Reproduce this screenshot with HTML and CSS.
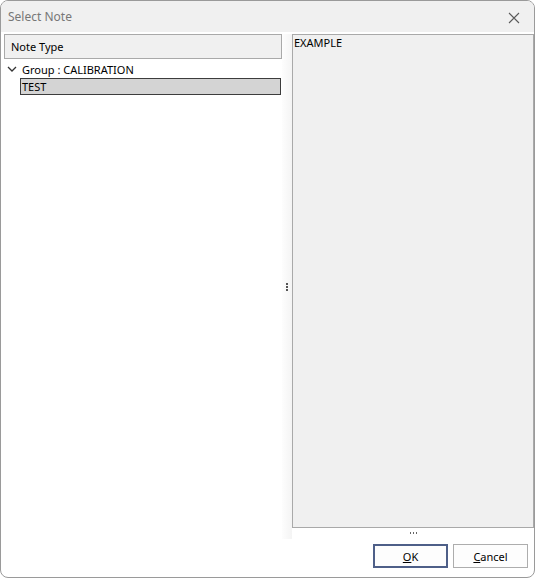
FILE: index.html
```html
<!DOCTYPE html>
<html>
<head>
<meta charset="utf-8">
<link rel="stylesheet" href="styles.css">
</head>
<body>
<div class="window">
  <div class="titlebar">
    <span class="title">Select Note</span>
    <span class="close">
      <svg width="12" height="12" viewBox="0 0 12 12"><path d="M1 1 L11 11 M11 1 L1 11" stroke="#5a5a5a" stroke-width="1.1" fill="none"/></svg>
    </span>
  </div>
  <div class="content">
    <div class="panes">
      <div class="left">
        <div class="header">Note Type</div>
        <div class="group">
          <svg class="chev" width="10" height="8" viewBox="0 0 10 8"><path d="M1 2 L5 6 L9 2" stroke="#333" stroke-width="1.3" fill="none"/></svg>
          <span>Group : CALIBRATION</span>
        </div>
        <div class="item">TEST</div>
      </div>
      <div class="splitter"><span class="vdots"></span></div>
      <div class="right">
        <div class="memo">EXAMPLE</div>
        <div class="hsplit"><span class="hdots"></span></div>
      </div>
    </div>
    <div class="buttons">
      <button class="btn default"><u>O</u>K</button>
      <button class="btn"><u>C</u>ancel</button>
    </div>
  </div>
</div>
</body>
</html>
```
FILE: styles.css
```css
html, body { margin: 0; padding: 0; background: #ffffff; }
body { width: 536px; height: 579px; overflow: hidden; font-family: "Noto Sans", "Open Sans", sans-serif; font-size: 11px; color: #000; }
.window { box-sizing: border-box; width: 535px; height: 578px; border: 1px solid #9a9a9a; border-radius: 8px; overflow: hidden; display: flex; flex-direction: column; background: #fff; }
.titlebar { height: 31px; background: #f0f0f0; display: flex; align-items: center; justify-content: space-between; padding: 0 14px 0 7px; flex: none; }
.title { color: #777; font-size: 12px; }
.close { display: flex; width: 12px; height: 12px; margin-top: 2px; }
.content { flex: 1; display: flex; flex-direction: column; padding: 2px 0 0 3px; }
.panes { display: flex; height: 505px; }
.left { width: 278px; display: flex; flex-direction: column; }
.header { box-sizing: border-box; height: 25px; border: 1px solid #a9a9a9; background: #f0f0f0; display: flex; align-items: center; padding-left: 6px; }
.group { height: 18px; display: flex; align-items: center; padding-left: 3px; margin-top: 1px; }
.chev { margin-right: 5px; }
.item { box-sizing: border-box; height: 17px; margin-left: 16px; width: 261px; background: #d4d4d4; border: 1px solid #3c3c3c; display: flex; align-items: center; padding-left: 1px; }
.splitter { width: 10px; background: linear-gradient(to right, #fdfdfd, #f4f4f4); display: flex; align-items: center; justify-content: center; }
.vdots { width: 2px; height: 8px; background: repeating-linear-gradient(to bottom, #555 0 2px, transparent 2px 3px); }
.right { flex: 1; display: flex; flex-direction: column; }
.memo { box-sizing: border-box; width: 242px; height: 494px; border: 1px solid #a9a9a9; background: #f0f0f0; padding: 0 1px; }
.hsplit { flex: 1; display: flex; justify-content: center; padding-top: 4px; width: 242px; }
.hdots { width: 7px; height: 2px; background: repeating-linear-gradient(to right, #666 0 1px, transparent 1px 3px); }
.buttons { display: flex; justify-content: flex-end; gap: 5px; padding-right: 6px; margin-top: 5px; }
.btn { box-sizing: border-box; width: 75px; height: 24px; background: #fdfdfd; border: 1px solid #adadad; font-family: inherit; font-size: 11px; color: #000; padding: 0; margin: 0; }
.btn.default { border: 2px solid #4e5f88; }
```
